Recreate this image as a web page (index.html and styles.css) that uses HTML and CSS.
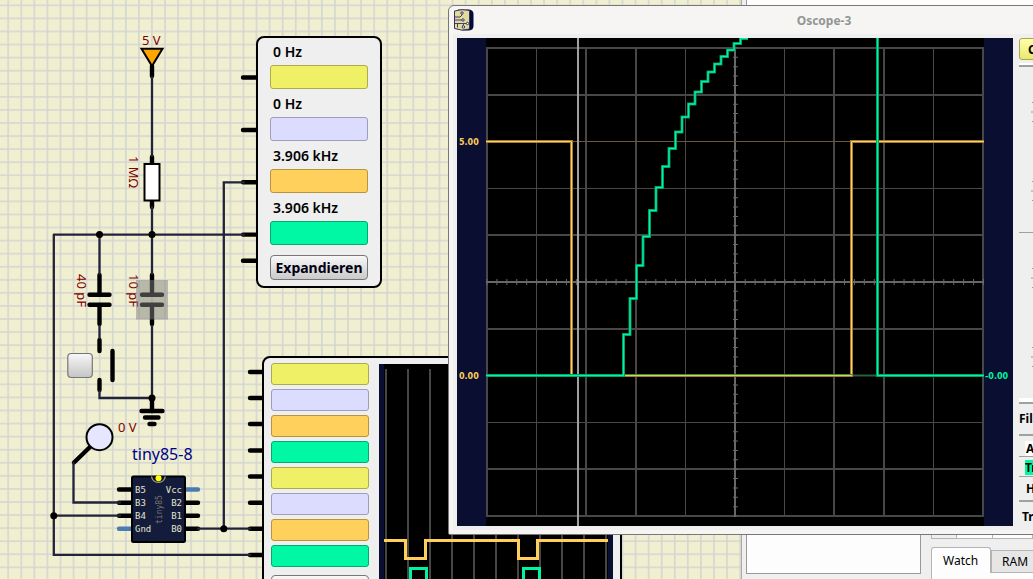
FILE: index.html
```html
<!DOCTYPE html>
<html lang="de">
<head>
<meta charset="utf-8">
<title>Oscope-3</title>
<link rel="stylesheet" href="styles.css">
</head>
<body>
<main class="desktop">
  <div class="canvas">
    <svg class="schematic" width="1400" height="900" viewBox="0 0 1400 900" role="img" aria-label="Schaltplan">
      <defs>
        <pattern id="grid" x="1.7" y="-1.2" width="13.07" height="13.07" patternUnits="userSpaceOnUse">
          <path d="M6.5 0V13.07M0 6.5H13.07" stroke="#d4d4d2" stroke-width="1.5" fill="none"/>
        </pattern>
        <linearGradient id="key" x1="0" y1="0" x2="0" y2="1">
          <stop offset="0" stop-color="#f8f8f8"/><stop offset="1" stop-color="#c4c4c4"/>
        </linearGradient>
      </defs>
      <rect width="1400" height="900" fill="#f0f0d0"/>
      <rect width="1400" height="900" fill="url(#grid)"/>

      <g class="lead" stroke-width="4.4">
        <path d="M152 66V76M152 157V164M152 201V207M99.500 275V294M99.500 305V324M152 275V294M152 305V324M99.500 340V351M99.500 380V390M152 400V411"/>
        <path d="M89.500 294.800H109.500M89.500 304.800H109.500M142 294.800H162M142 304.800H162M112.500 351V380"/>
        <path d="M141.500 411H162.500M145 417.500H158.500M149.500 424H154.500M90 447L74 462.500"/>
        <path d="M119 489.500H132M119 502.700H132M119 515.700H132M185 502.700H198M185 515.700H198M185 528.700H198"/>
        <path d="M243 77.500H257M243 130H257M243 182.300H257M243 234.600H257M243 260.800H257"/>
        <path d="M250 372H263M250 398H263M250 424H263M250 450.500H263M250 476.500H263M250 502.700H263M250 528.800H263M250 555H263"/>
      </g>
      <path class="lead supply" stroke-width="4.4" d="M119 528.700H132M185 489.500H198"/>

      <path class="wire" stroke-width="2.3" d="M152 77V156M152 207V274M53.800 234.600H244M53.800 234.600V554.800H250M99.500 235V274M99.500 326V338M99.500 391V398H152M152 326V398M244 182.300H223.800V528.700M198 528.700H250M54 515.700H120M73.500 463V502.500H120"/>
      <g fill="#000">
        <circle cx="99.500" cy="234.600" r="3.500"/><circle cx="152" cy="234.600" r="3.500"/>
        <circle cx="152" cy="398" r="3.500"/><circle cx="53.800" cy="515.700" r="3.500"/><circle cx="223.800" cy="528.700" r="3.500"/>
      </g>

      <path d="M141.500 48.800H162.500L152 66Z" fill="#ffa500" stroke="#000" stroke-width="2"/>
      <rect x="144.500" y="164" width="15" height="36.500" fill="#fff" stroke="#000" stroke-width="2"/>
      <rect x="67.800" y="353.500" width="24.500" height="24" rx="3.500" fill="url(#key)" stroke="#777" stroke-width="1.200"/>
      <circle cx="99.500" cy="437.200" r="13" fill="#e6e6ff" stroke="#000" stroke-width="2"/>

      <rect x="132" y="476.500" width="53" height="65.500" rx="1.500" fill="#141c3c" stroke="#000" stroke-width="2"/>
      <path d="M151.500 476.500A7 7 0 0 0 165.300 476.500Z" fill="#111522"/>
      <path d="M151.500 476.500A7 7 0 0 0 165.300 476.500" fill="none" stroke="#a8a890" stroke-width="1.300"/>
      <circle cx="158.500" cy="478.300" r="3" fill="#ff0"/>
      <g class="pin">
        <text x="135" y="493">B5</text><text x="135" y="506">B3</text><text x="135" y="519">B4</text><text x="135" y="532">Gnd</text>
        <g text-anchor="end">
          <text x="182" y="493">Vcc</text><text x="182" y="506">B2</text><text x="182" y="519">B1</text><text x="182" y="532">B0</text>
        </g>
      </g>
      <text class="chip-id" transform="translate(162 524) rotate(-90)">tiny85</text>

      <g class="value">
        <text x="142" y="45">5 V</text>
        <text transform="translate(129 156) rotate(90)">1 MΩ</text>
        <text transform="translate(77 274) rotate(90)">40 pF</text>
        <text transform="translate(129 274) rotate(90)">10 pF</text>
        <text x="118" y="432">0 V</text>
      </g>
      <rect x="136" y="280" width="32" height="39.500" fill="#808080" fill-opacity=".5"/>
      <text class="part" x="132" y="460">tiny85-8</text>
    </svg>

    <section class="meter" aria-label="Frequenzmesser">
      <div class="reading"><span>0 Hz</span><button class="channel yellow" aria-label="Kanal 1"></button></div>
      <div class="reading"><span>0 Hz</span><button class="channel lilac" aria-label="Kanal 2"></button></div>
      <div class="reading"><span>3.906 kHz</span><button class="channel orange" aria-label="Kanal 3"></button></div>
      <div class="reading"><span>3.906 kHz</span><button class="channel green" aria-label="Kanal 4"></button></div>
      <button class="expand">Expandieren</button>
    </section>

    <section class="analyzer" aria-label="Logikanalysator">
      <div class="channels">
        <button class="channel yellow" aria-label="Kanal 1"></button>
        <button class="channel lilac" aria-label="Kanal 2"></button>
        <button class="channel orange" aria-label="Kanal 3"></button>
        <button class="channel green" aria-label="Kanal 4"></button>
        <button class="channel yellow" aria-label="Kanal 5"></button>
        <button class="channel lilac" aria-label="Kanal 6"></button>
        <button class="channel orange" aria-label="Kanal 7"></button>
        <button class="channel green" aria-label="Kanal 8"></button>
        <button class="expand low" aria-label="Expandieren"></button>
      </div>
      <svg class="screen" width="234" height="240" viewBox="379 364 234 240" aria-hidden="true">
        <rect x="379" y="364" width="234" height="240" fill="#0a0e30"/>
        <rect x="384" y="364" width="224" height="240" fill="#000"/>
        <path d="M386 369V604M408 369V604M430 369V604M452 369V604M474 369V604M496 369V604M518 369V604M540 369V604M562 369V604M584 369V604M606 369V604" stroke="#464646" stroke-width="2"/>
        <path d="M384 540.500H405.500V558.500H425.500V540.500H518.500V558.500H537.500V540.500H608" fill="none" stroke="#ffcf5a" stroke-width="3"/>
        <path d="M410.500 604V568.500H426.500V604M523.500 604V568.500H539.500V604" fill="none" stroke="#00f5a0" stroke-width="3"/>
      </svg>
    </section>
  </div>

  <aside class="sidebar">
    <div class="viewer"></div>
    <div class="docks">
      <div class="editor"></div>
      <div class="monitor">
        <table class="registers"><tr><th>PC</th><td></td><td></td></tr></table>
        <div class="tabs" role="tablist">
          <button class="tab active" role="tab" aria-selected="true">Watch</button>
          <button class="tab" role="tab" aria-selected="false">RAM</button>
        </div>
        <div class="tab-page"></div>
      </div>
    </div>
  </aside>

  <section class="window" aria-label="Oscope-3">
    <header class="titlebar">
      <svg class="app-icon" width="20" height="22" viewBox="0 0 20 22" aria-hidden="true">
        <path d="M4 .5H15Q19.500 1 19.500 5V17Q19.500 21 15 21.500H8Z" fill="#080838"/>
        <path d="M.500 2Q8-.5 15.500 1.500V20Q8 22.500 .500 19.500Z" fill="#dedc98" stroke="#383060"/>
        <path d="M1 8H6L8 6V4M1 11H8M1 14.500H13M3.500 18.500V14.500M10 14.500L8 18.500" fill="none" stroke="#4a3c70"/>
        <g fill="#fff" stroke="#383060"><circle cx="8" cy="4" r="1.200"/><circle cx="9" cy="11" r="1.200"/><circle cx="13.500" cy="14.500" r="1.200"/><circle cx="9.500" cy="18" r="1.200"/></g>
      </svg>
      <h1>Oscope-3</h1>
    </header>
    <div class="scope">
      <svg class="plot" width="556" height="488" viewBox="457 38 556 488" role="img" aria-label="Oszilloskopanzeige">
        <rect x="457" y="38" width="556" height="488" fill="#0a0e30"/>
        <rect x="486" y="38" width="498" height="488" fill="#000"/>
        <g fill="none" stroke="#484848">
          <path stroke-width="2" d="M487 47V517M586 47V517M636 47V517M834 47V517M884 47V517M983 47V517M486 48H984M486 95H984M486 235H984M486 329H984M486 469H984M486 516H984"/>
          <path d="M536.500 48V516M685.500 48V516M784.500 48V516M933.500 48V516M486 188.500H984M486 422.500H984"/>
        </g>
        <g fill="none" stroke="#686868">
          <path stroke-width="2" d="M735 47V517M486 282H984"/>
          <path stroke-width="5" stroke-dasharray="1 8.360" d="M735.500 47.500V516"/>
          <path stroke-width="6" stroke-dasharray="1 8.930" d="M486.500 282H984"/>
        </g>
        <path d="M486 141.500H984" stroke="#6a5838"/>
        <path d="M486 375.500H984" stroke="#2d6040" stroke-width="2"/>
        <path d="M578 38V526" stroke="#a0a0a0" stroke-width="2"/>
        <g fill="none">
          <path d="M486 141.500H571.500V375.500H851.500V141.500H984" stroke="#a47c30" stroke-width="3"/>
          <path d="M486 141.500H571.500V375.500H851.500V141.500H984" stroke="#ffd060"/>
          <path d="M623 374.500H852" stroke="#4a8438"/><path d="M623 375.500H852" stroke="#c8d860"/>
          <path d="M486 375.500H623.500V334.500H630V298.500H636.500V265.500H643V236.500H649.500V210.500H656V187.500H662.500V166.500H669V148.500H675.500V132H682V117H688.500V104H695V92H701.500V81.500H708V72H714.500V64H721V56.500H727.500V50H734V43.500H740.500V38.500H748M877.500 38V375.500H984" stroke="#008c5c" stroke-width="3"/>
          <path d="M486 375.500H623.500V334.500H630V298.500H636.500V265.500H643V236.500H649.500V210.500H656V187.500H662.500V166.500H669V148.500H675.500V132H682V117H688.500V104H695V92H701.500V81.500H708V72H714.500V64H721V56.500H727.500V50H734V43.500H740.500V38.500H748M877.500 38V375.500H984" stroke="#00f5a0" stroke-width="1.400"/>
        </g>
        <g class="level">
          <text x="459" y="145" fill="#ffcf5a">5.00</text>
          <text x="459" y="379" fill="#ffcf5a">0.00</text>
          <text x="985" y="379" fill="#00f5a0">-0.00</text>
        </g>
      </svg>
      <div class="controls">
        <button class="chan-tab">C</button>
        <div class="dial-group">
          <svg class="dial" width="8" height="22" viewBox="0 0 8 22" aria-hidden="true"><path d="M7 1.500H8M6 11H8M7 20.500H8" stroke="#999"/></svg>
          <svg class="dial" width="8" height="22" viewBox="0 0 8 22" aria-hidden="true"><path d="M7 1.500H8M6 11H8M7 20.500H8" stroke="#999"/></svg>
        </div>
        <div class="dial-group lower">
          <svg class="dial" width="8" height="22" viewBox="0 0 8 22" aria-hidden="true"><path d="M7 1.500H8M6 11H8M7 20.500H8" stroke="#999"/></svg>
          <svg class="dial" width="8" height="22" viewBox="0 0 8 22" aria-hidden="true"><path d="M7 1.500H8M6 11H8M7 20.500H8" stroke="#999"/></svg>
        </div>
        <div class="option filter">Fil</div>
        <div class="option inset auto"><span>A</span></div>
        <div class="option inset picked"><span>Tr</span></div>
        <div class="option inset plain"><span>H</span></div>
        <div class="option last">Tr</div>
      </div>
    </div>
  </section>
</main>
</body>
</html>
```

FILE: styles.css
```css
* { box-sizing: border-box; }

body {
  margin: 0;
  font-family: "Noto Sans", "Open Sans", sans-serif;
  font-size: 14px;
  color: #000;
}

button {
  font: inherit;
  color: inherit;
  padding: 0;
}

.desktop {
  position: relative;
  display: flex;
  height: 100vh;
  overflow: hidden;
  background: #efefef;
}

/* Schematic canvas */
.canvas {
  position: relative;
  flex: 1;
  min-width: 0;
  overflow: hidden;
}

.schematic { display: block; }

.lead {
  fill: none;
  stroke: #000;
  stroke-linecap: round;
}
.supply { stroke: #4a7cb2; }
.wire {
  fill: none;
  stroke: #22223a;
  stroke-linecap: round;
}
.value { fill: #800000; font-size: 13px; }
.part { fill: #000088; font-size: 16px; }
.pin {
  fill: #e6e6d0;
  font-family: "DejaVu Sans Mono", monospace;
  font-size: 9px;
}
.chip-id {
  fill: #77776c;
  font-family: "DejaVu Sans Mono", monospace;
  font-size: 8px;
}

/* Instruments on the canvas */
.meter,
.analyzer {
  position: absolute;
  border: 2px solid #000;
  border-radius: 8px;
  background: #efefef;
}

.meter {
  left: 256px;
  top: 36px;
  width: 126px;
  padding: 0 12px 6px;
  display: flex;
  flex-direction: column;
  gap: 1px;
}

.reading {
  display: flex;
  flex-direction: column;
  font-weight: 600;
  line-height: 27px;
}
.reading span { padding-left: 3px; }
.reading .channel { height: 24px; }

.channel {
  border: 1px solid;
  border-radius: 3px;
}
.yellow { background: #f0f066; border-color: #acac4c; }
.lilac { background: #dcdcff; border-color: #9e9eb8; }
.orange { background: #ffd05c; border-color: #b8943e; }
.green { background: #00f8a4; border-color: #00aa70; }

.expand {
  height: 25px;
  margin-top: 9px;
  border: 1px solid #777;
  border-radius: 4px;
  background: linear-gradient(#f8f8f8, #cacaca);
  color: #000014;
  font-weight: 700;
  line-height: 22px;
}

.analyzer {
  left: 262px;
  top: 356px;
  width: 360px;
  padding: 5px 7px;
  display: flex;
  gap: 10px;
}
.channels {
  flex: 1;
  display: flex;
  flex-direction: column;
  gap: 4px;
}
.channels .channel { height: 22px; }
.expand.low { margin-top: 4px; }
.screen { margin-top: 1px; }

/* Right-hand docks */
.sidebar {
  width: 292px;
  display: flex;
  flex-direction: column;
  padding-left: 4px;
  border-left: 1px solid #a8a8a8;
  background: #efefef;
}
.viewer {
  height: 500px;
  border-left: 1px solid #9a9a9a;
  background: #fdfdfd;
}
.docks {
  flex: 1;
  display: flex;
}
.editor {
  width: 175px;
  margin-bottom: 5px;
  border: 1px solid #9a9a9a;
  border-top: 0;
  background: #fdfdfd;
}
.monitor {
  flex: 1;
  min-width: 0;
  padding: 19px 0 0 10px;
  display: flex;
  flex-direction: column;
}
.registers {
  border-collapse: collapse;
  width: 102px;
  height: 20px;
  margin-bottom: 8px;
  table-layout: fixed;
}
.registers th,
.registers td {
  padding: 0;
  border: 1px solid #b4b4b4;
  background: #fdfdfd;
  font-size: 13px;
  font-weight: 600;
  line-height: 18px;
}
.registers th { width: 25px; background: #efefef; }
.registers td:nth-child(2) { width: 36px; }
.tabs { display: flex; align-items: flex-end; }
.tab {
  flex: none;
  height: 23px;
  width: 60px;
  padding-left: 10px;
  text-align: left;
  border: 1px solid #b4b4b4;
  background: #e6e6e6;
  font-size: 12px;
}
.tab.active {
  height: 26px;
  padding-left: 11px;
  border-bottom: 0;
  border-radius: 3px 3px 0 0;
  background: #fdfdfd;
}
.tab-page {
  flex: 1;
  border-left: 1px solid #b4b4b4;
  background: #fdfdfd;
}

/* Oscilloscope window, reaching past the right edge of the desktop */
.window {
  position: absolute;
  left: 448px;
  top: 5px;
  width: 752px;
  padding: 0 4px 4px;
  border: 1px solid #777;
  border-radius: 6px 6px 2px 2px;
  background: #f6f5f4;
}
.titlebar {
  position: relative;
  display: flex;
  justify-content: center;
  align-items: center;
  height: 28px;
}
.app-icon { position: absolute; left: 1px; top: 3px; }
.titlebar h1 {
  margin: 0;
  font-size: 12px;
  font-weight: 700;
  color: #929595;
}
.scope {
  display: flex;
  gap: 6px;
  padding: 4px;
  background: #efefef;
}
.level {
  font-family: "DejaVu Sans", sans-serif;
  font-size: 8px;
  font-weight: 700;
}
.plot { flex: none; }
.controls {
  flex: 1;
  display: flex;
  flex-direction: column;
  font-size: 12px;
  font-weight: 700;
}
.chan-tab {
  height: 22px;
  padding-left: 8px;
  margin-bottom: 5px;
  text-align: left;
  border: 1px solid #a8a848;
  border-radius: 3px;
  background: linear-gradient(#ffffae, #e8e870);
}
.dial-group {
  display: flex;
  flex-direction: column;
  gap: 57px;
  height: 167px;
  padding: 34px 0 0 6px;
  border-top: 2px solid #a0a0a0;
  box-shadow: 0 -2px #fff;
}
.dial-group.lower {
  height: 170px;
  border-top-width: 1px;
  box-shadow: none;
}
.option {
  line-height: 29px;
  border-top: 2px solid #a0a0a0;
}
.filter {
  height: 32px;
  box-shadow: 0 -4px #fff;
}
.option.inset {
  line-height: 15px;
  padding: 5px 0 0 6px;
}
.option.inset span {
  display: block;
  padding-left: 1px;
  background: #fff;
}
.option.auto { height: 22px; }
.option.picked { height: 20px; padding-top: 3px; border-top-width: 1px; }
.option.plain { height: 24px; padding-top: 4px; border-top-width: 1px; }
.option.picked span { padding-left: 0; background: #00f8a4; }
.option.plain span { background: none; }
.option.last { height: 26px; padding-left: 3px; }
```
